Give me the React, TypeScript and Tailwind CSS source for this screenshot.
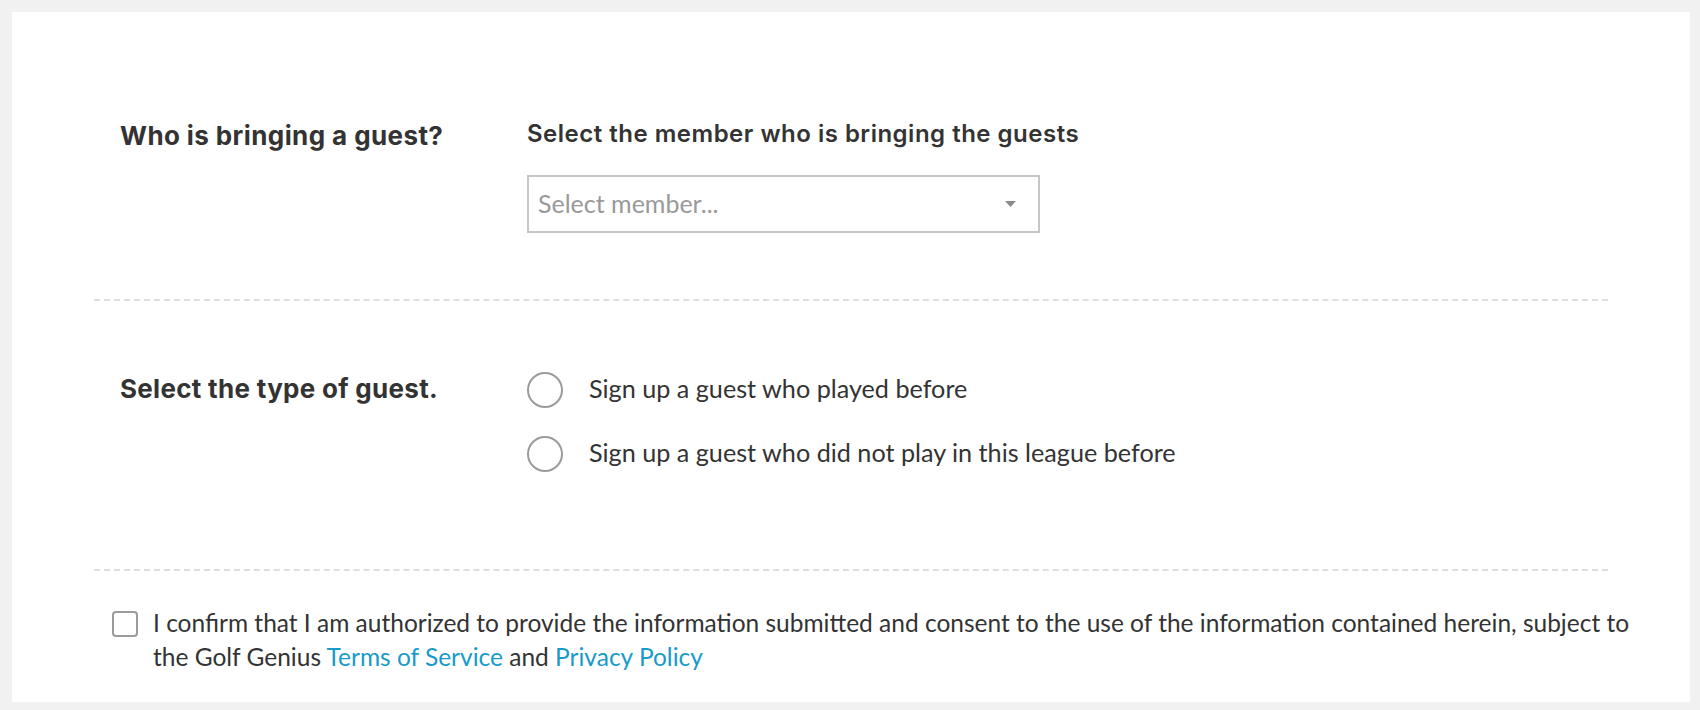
import { useState } from "react";

function Radio({ checked, onClick }: { checked: boolean; onClick: () => void }) {
  return (
    <button
      type="button"
      onClick={onClick}
      className="w-[36px] h-[36px] shrink-0 rounded-full border-2 border-[#9b9b9b] bg-white flex items-center justify-center"
    >
      {checked && <span className="w-[18px] h-[18px] rounded-full bg-[#189acb]" />}
    </button>
  );
}

const GUEST_TYPES = [
  { key: "returning", label: "Sign up a guest who played before" },
  { key: "new", label: "Sign up a guest who did not play in this league before" },
];

export default function App() {
  const [guestType, setGuestType] = useState<string | null>(null);
  const [agreed, setAgreed] = useState(false);

  return (
    <div className="min-h-screen bg-[#f1f1f1] pt-3 pl-3 pr-[10px] pb-2 font-['Lato',sans-serif] text-[#333]">
      <div className="bg-white h-[690px]">
        {/* Member */}
        <section className="mx-[82px] border-b-2 border-dashed border-[#dedede] pt-[107px] pb-[66px] pl-[26px] flex">
          <h2 className="w-[407px] shrink-0 mt-[1px] font-['Inter',sans-serif] text-[26px] leading-[32px] tracking-[0.4px] font-bold">
            Who is bringing a guest?
          </h2>
          <div>
            <p className="font-['Inter',sans-serif] text-[24px] leading-[30px] tracking-[0.5px] font-semibold">
              Select the member who is bringing the guests
            </p>
            <div className="mt-[26px] w-[513px] h-[58px] border-2 border-[#c6c6c6] flex items-center justify-between pl-[9px] pr-[22px] cursor-pointer">
              <span className="text-[25px] text-[#999]">Select member...</span>
              <svg width="11" height="6" viewBox="0 0 11 6">
                <path d="M0 0h11L5.5 6z" fill="#8a8a8a" />
              </svg>
            </div>
          </div>
        </section>

        {/* Guest type */}
        <section className="mx-[82px] border-b-2 border-dashed border-[#dedede] pt-[71px] pb-[97px] pl-[26px] flex">
          <h2 className="w-[407px] shrink-0 mt-[1px] font-['Inter',sans-serif] text-[26px] leading-[32px] tracking-[0.3px] font-bold">
            Select the type of guest.
          </h2>
          <div className="flex flex-col gap-[28px]">
            {GUEST_TYPES.map((g) => (
              <label key={g.key} className="flex items-center gap-[26px] cursor-pointer">
                <Radio checked={guestType === g.key} onClick={() => setGuestType(g.key)} />
                <span className="text-[25.2px] leading-[30px] -mt-[5px]">{g.label}</span>
              </label>
            ))}
          </div>
        </section>

        {/* Consent */}
        <div className="flex gap-[15px] pt-[35px] pl-[100px] pr-[48px]">
          <button
            type="button"
            onClick={() => setAgreed(!agreed)}
            className="mt-[5px] w-[26px] h-[26px] shrink-0 rounded-[4px] border-2 border-[#9b9b9b] bg-white"
          />
          <p className="text-[24.5px] leading-[34px]">
            I confirm that I am authorized to provide the information submitted and consent to the use
            of the information contained herein, subject to the Golf Genius{" "}
            <a href="#" className="text-[#189acb]">Terms of Service</a> and{" "}
            <a href="#" className="text-[#189acb]">Privacy Policy</a>
          </p>
        </div>
      </div>
    </div>
  );
}
